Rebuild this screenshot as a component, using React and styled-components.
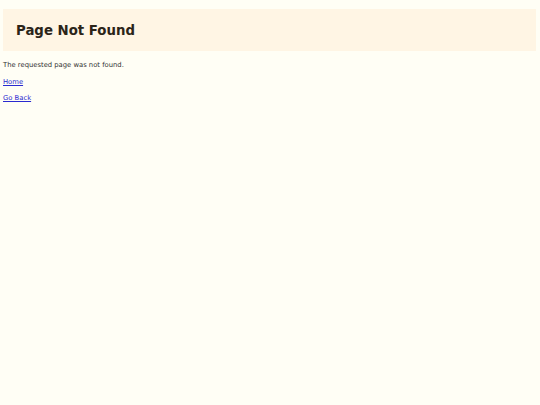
import React from "react";
import styled, { createGlobalStyle } from "styled-components";

const GlobalStyle = createGlobalStyle`
  html, body {
    margin: 0;
    padding: 0;
    background: #fffef5;
  }
  body {
    font-family: "DejaVu Sans", Verdana, sans-serif;
    min-height: 405px;
  }
`;

const Page = styled.div`
  padding: 9px 4px 0 3px;
`;

const Header = styled.header`
  background: #fff5e4;
  padding: 14px 13px 13px;
`;

const Title = styled.h1`
  margin: 0;
  font-size: 13.3px;
  line-height: 15px;
  font-weight: bold;
  color: #2b2418;
`;

const Message = styled.p`
  margin: 10px 0 0;
  font-size: 6.8px;
  line-height: 8px;
  color: #333;
`;

const NavLink = styled.a`
  display: block;
  margin-top: 8.5px;
  font-size: 6.8px;
  line-height: 8px;
  color: #2a2ad0;
`;

const App = () => {
  return (
    <>
      <GlobalStyle />
      <Page>
        <Header>
          <Title>Page Not Found</Title>
        </Header>
        <Message>The requested page was not found.</Message>
        <NavLink href="#">Home</NavLink>
        <NavLink href="#" onClick={(e) => { e.preventDefault(); window.history.back(); }}>
          Go Back
        </NavLink>
      </Page>
    </>
  );
};

export default App;
